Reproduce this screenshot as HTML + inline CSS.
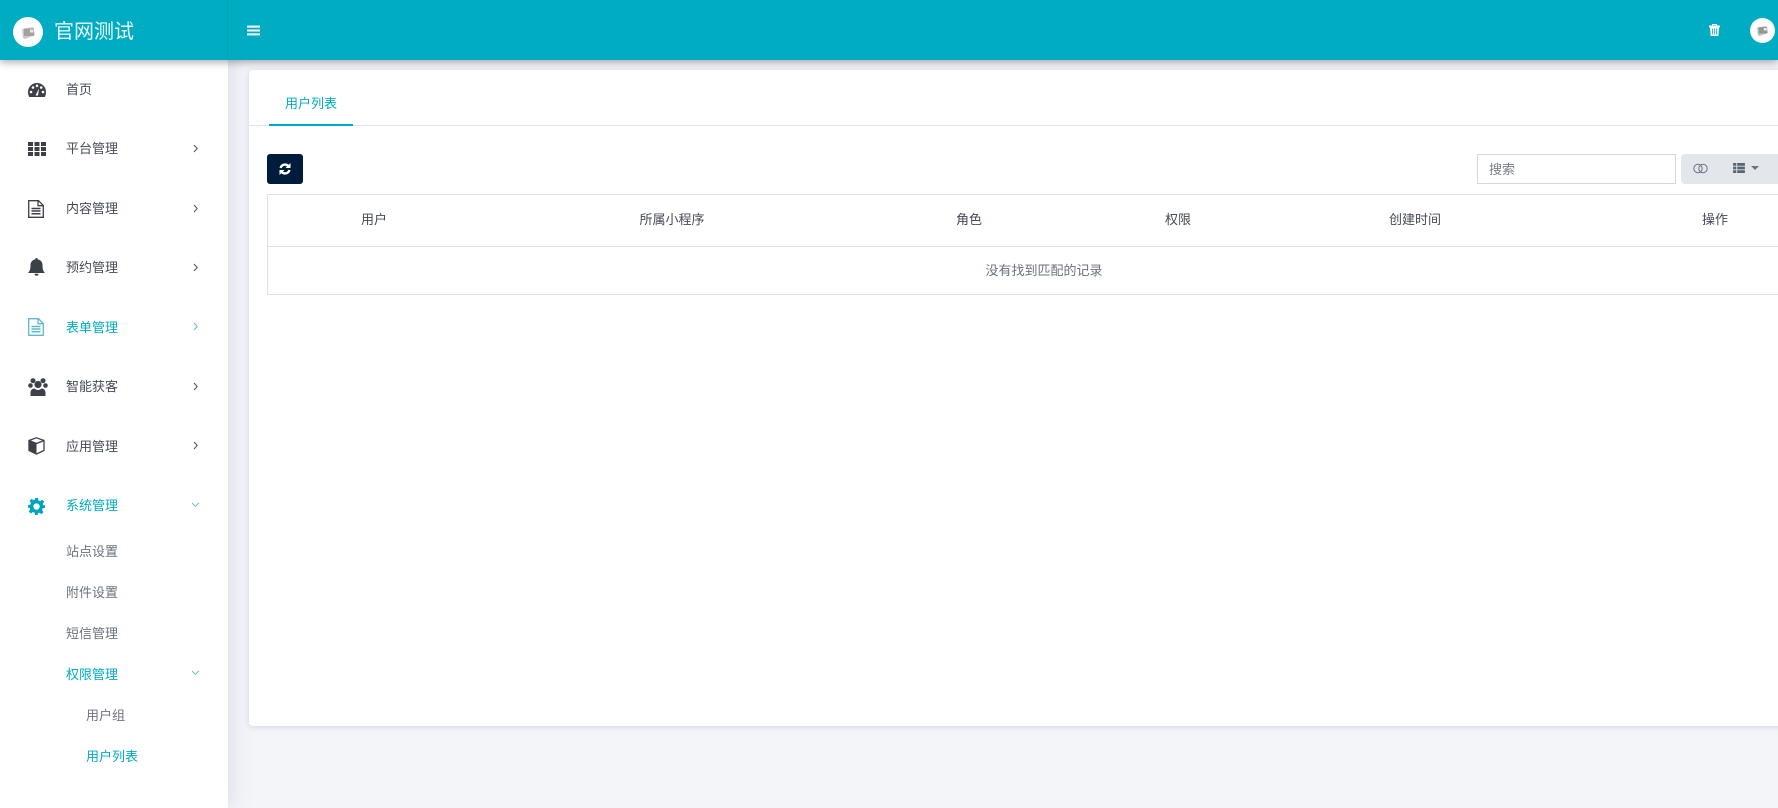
<!DOCTYPE html>
<html lang="zh">
<head>
<meta charset="utf-8">
<title>用户列表</title>
<style>
html,body{margin:0;padding:0;width:1778px;height:808px;overflow:hidden;background:#f4f5f9;font-family:"Liberation Sans","Noto Sans CJK SC",sans-serif;font-size:13px;color:#444b57}
*{box-sizing:border-box}
.a{position:absolute}
.t{position:absolute;white-space:nowrap;line-height:18px;height:18px}
svg{position:absolute;display:block}
#side{left:0;top:0;width:228px;height:808px;background:#fff;box-shadow:0 0 22px rgba(120,130,160,.25)}
#head{left:0;top:0;width:1778px;height:60px;background:#00acc1;box-shadow:0 2px 8px rgba(0,0,0,.35);z-index:3}
#card{left:249px;top:70px;width:1600px;height:656px;background:#fff;border-radius:4px;box-shadow:0 1px 6px rgba(120,130,160,.28)}
.c{color:#00acc1}
.g{color:#6b7280}
.th{transform:translateX(-50%)}
</style>
</head>
<body>
<div class="a" id="side"></div>
<div class="a" id="card"></div>

<div class="a" id="head">
  <div class="a" style="left:227px;top:0;width:1px;height:60px;background:rgba(0,0,0,.05)"></div>
  <div class="a" style="left:13px;top:17px;width:30px;height:30px;border-radius:50%;background:#fff"></div>
  <svg style="left:21px;top:26px" width="15" height="14" viewBox="0 0 15 14"><path d="M1 3l11-2 2 8-10 4-2-1z" fill="#c8c8c8"/><path d="M3 2.500h10v7.500H3z" fill="#a2a2a2"/><path d="M9 3.500h3.500v3H9z" fill="#e8e8e8"/></svg>
  <div class="t" style="left:54px;top:20px;font-size:20px;line-height:24px;height:24px;color:#e9fbfd">官网测试</div>
  <svg style="left:247px;top:25px" width="13" height="11" viewBox="0 0 13 11"><path d="M0 1.600h13M0 5.500h13M0 9.400h13" stroke="#fff" stroke-width="2"/></svg>
  <svg style="left:1709px;top:24px" width="11" height="12" viewBox="0 0 11 12"><path d="M0 2h11v1H0zM3.500 2V.5h4V2" fill="none" stroke="#fff" stroke-width="1"/><path d="M1 3h9l-.6 9H1.600z" fill="#fff"/><path d="M3.500 4.500v6M5.500 4.500v6M7.500 4.500v6" stroke="#00acc1" stroke-width=".8"/></svg>
  <div class="a" style="left:1750px;top:18px;width:25px;height:25px;border-radius:50%;background:#fff"></div>
  <svg style="left:1756px;top:25px" width="13" height="12" viewBox="0 0 15 14"><path d="M1 3l11-2 2 8-10 4-2-1z" fill="#c8c8c8"/><path d="M3 2.500h10v7.500H3z" fill="#959595"/><path d="M9 3.500h3.500v3H9z" fill="#e8e8e8"/></svg>
</div>

<!-- sidebar icons -->
<svg style="left:28px;top:83px" width="18" height="14" viewBox="0 0 18 14"><path d="M9 0a9 9 0 0 1 9 9c0 1.800-.4 3.400-1.200 5H1.200C.4 12.400 0 10.800 0 9a9 9 0 0 1 9-9z" fill="#3c4048"/><circle cx="3" cy="9" r="1.300" fill="#fff"/><circle cx="5" cy="4.500" r="1.300" fill="#fff"/><circle cx="9" cy="2.800" r="1.300" fill="#fff"/><circle cx="13.200" cy="4.500" r="1.300" fill="#fff"/><circle cx="15" cy="9" r="1.300" fill="#fff"/><path d="M7.500 12.500L11 5.500l-1 7z" fill="#fff"/></svg>
<svg style="left:28px;top:142px" width="18" height="14" viewBox="0 0 18 14" fill="#3c4048"><path d="M0 0h5v4H0zM6.500 0h5v4h-5zM13 0h5v4h-5zM0 5h5v4H0zM6.500 5h5v4h-5zM13 5h5v4h-5zM0 10h5v4H0zM6.500 10h5v4h-5zM13 10h5v4h-5z"/></svg>
<svg style="left:28px;top:200px" width="16" height="18" viewBox="0 0 16 18" fill="none" stroke="#3c4048" stroke-width="1.300"><path d="M.7.700h9.800l4.800 4.800v11.800H.7zM10 .7v5h5.300"/><path d="M3.500 8.500h9M3.500 11h9M3.500 13.700h9" stroke-width="1.500"/></svg>
<svg style="left:28px;top:258px" width="17" height="18" viewBox="0 0 17 18" fill="#3c4048"><path d="M8.500 0c.8 0 1.200.6 1.200 1.300C12.600 2 14.500 4 14.500 7c0 4 .6 6 2.500 8H0c1.900-2 2.500-4 2.500-8 0-3 1.900-5 4.800-5.700C7.300.6 7.700 0 8.500 0z"/><path d="M6.500 15.700h4a2 2 0 0 1-4 0z"/></svg>
<svg style="left:28px;top:318px" width="16" height="18" viewBox="0 0 16 18" fill="none" stroke="#5fb9cb" stroke-width="1.300"><path d="M.7.700h9.800l4.800 4.800v11.800H.7zM10 .7v5h5.300"/><path d="M3.500 8.500h9M3.500 11h9M3.500 13.700h9" stroke-width="1.500"/></svg>
<svg style="left:28px;top:378px" width="20" height="18" viewBox="0 0 20 18" fill="#3c4048"><circle cx="5" cy="2.700" r="2.500"/><circle cx="15" cy="2.700" r="2.500"/><circle cx="2.500" cy="7.500" r="2.300"/><circle cx="17.500" cy="7.500" r="2.300"/><circle cx="10" cy="6.500" r="3.600"/><path d="M2.500 18v-3.500c0-2.500 2-4 4-4 1 1 2.300 1.500 3.500 1.500s2.500-.5 3.500-1.500c2 0 4 1.500 4 4V18z"/></svg>
<svg style="left:28px;top:437px" width="17" height="18" viewBox="0 0 17 18"><path d="M8.500.8L16 3.500v10L8.500 17 1 13.500v-10z" fill="#fff" stroke="#3c4048" stroke-width="1.300"/><path d="M1 3.500l7.500 3v10.500L1 13.500z" fill="#3c4048"/><path d="M1 3.500l7.500 3 7.500-3" fill="none" stroke="#3c4048" stroke-width="1.300"/></svg>
<svg style="left:28px;top:498px" width="17" height="17" viewBox="0 0 24 24"><path fill="#00a5bd" fill-rule="evenodd" d="M10 0h4l.7 3.400 2.300 1 3-2 2.800 2.800-2 3 1 2.300L24 10v4l-3.200.7-1 2.300 2 3-2.800 2.800-3-2-2.300 1L14 24h-4l-.7-3.200-2.300-1-3 2-2.800-2.800 2-3-1-2.300L0 14v-4l3.200-.7 1-2.300-2-3L5 1.200l3 2 1.300-.6zM12 7.500a4.500 4.500 0 1 0 0 9 4.500 4.500 0 0 0 0-9z"/></svg>

<!-- sidebar text -->
<div class="t" style="left:66px;top:81px">首页</div>
<div class="t" style="left:66px;top:140px">平台管理</div>
<div class="t" style="left:66px;top:200px">内容管理</div>
<div class="t" style="left:66px;top:259px">预约管理</div>
<div class="t c" style="left:66px;top:319px">表单管理</div>
<div class="t" style="left:66px;top:378px">智能获客</div>
<div class="t" style="left:66px;top:438px">应用管理</div>
<div class="t c" style="left:66px;top:497px">系统管理</div>
<div class="t g" style="left:66px;top:543px">站点设置</div>
<div class="t g" style="left:66px;top:584px">附件设置</div>
<div class="t g" style="left:66px;top:625px">短信管理</div>
<div class="t c" style="left:66px;top:666px">权限管理</div>
<div class="t g" style="left:86px;top:707px">用户组</div>
<div class="t c" style="left:86px;top:748px">用户列表</div>

<!-- chevrons -->
<svg style="left:193px;top:144px" width="6" height="9" viewBox="0 0 6 9"><path d="M1 1l3.200 3.500L1 8" fill="none" stroke="#4a5260" stroke-width="1"/></svg>
<svg style="left:193px;top:204px" width="6" height="9" viewBox="0 0 6 9"><path d="M1 1l3.200 3.500L1 8" fill="none" stroke="#4a5260" stroke-width="1"/></svg>
<svg style="left:193px;top:263px" width="6" height="9" viewBox="0 0 6 9"><path d="M1 1l3.200 3.500L1 8" fill="none" stroke="#4a5260" stroke-width="1"/></svg>
<svg style="left:193px;top:322px" width="6" height="9" viewBox="0 0 6 9"><path d="M1 1l3.200 3.500L1 8" fill="none" stroke="#5fbccd" stroke-width="1"/></svg>
<svg style="left:193px;top:382px" width="6" height="9" viewBox="0 0 6 9"><path d="M1 1l3.200 3.500L1 8" fill="none" stroke="#4a5260" stroke-width="1"/></svg>
<svg style="left:193px;top:441px" width="6" height="9" viewBox="0 0 6 9"><path d="M1 1l3.200 3.500L1 8" fill="none" stroke="#4a5260" stroke-width="1"/></svg>
<svg style="left:191px;top:502px" width="9" height="6" viewBox="0 0 9 6"><path d="M1 1l3.500 3.200L8 1" fill="none" stroke="#5fbccd" stroke-width="1"/></svg>
<svg style="left:191px;top:670px" width="9" height="6" viewBox="0 0 9 6"><path d="M1 1l3.500 3.200L8 1" fill="none" stroke="#5fbccd" stroke-width="1"/></svg>

<!-- tabs -->
<div class="a" style="left:249px;top:125px;width:1529px;height:1px;background:#e1e3e8"></div>
<div class="a" style="left:269px;top:124px;width:84px;height:2px;background:#00acc1"></div>
<div class="t c" style="left:285px;top:95px">用户列表</div>

<!-- toolbar -->
<div class="a" style="left:267px;top:154px;width:36px;height:30px;background:#001c3d;border-radius:3px"></div>
<svg style="left:279px;top:163px" width="12" height="12" viewBox="0 0 12 12" fill="none" stroke="#fff" stroke-width="2.400"><path d="M1.600 5A4.500 4.500 0 0 1 9.600 3.400"/><path d="M10.400 7A4.500 4.500 0 0 1 2.400 8.600"/><path d="M11.500 0v5H6.500z" fill="#fff" stroke="none"/><path d="M.5 12V7h5z" fill="#fff" stroke="none"/></svg>
<div class="a" style="left:1477px;top:154px;width:199px;height:30px;background:#fff;border:1px solid #d6d7e0"></div>
<div class="t g" style="left:1489px;top:161px;color:#777e89">搜索</div>
<div class="a" style="left:1681px;top:154px;width:97px;height:30px;background:#e3e6ea;border-radius:4px 0 0 4px"></div>
<svg style="left:1693px;top:163px" width="15" height="11" viewBox="0 0 15 11" fill="none" stroke="#6b7280" stroke-width="1"><circle cx="5" cy="5.500" r="4.200"/><circle cx="10" cy="5.500" r="4.200"/></svg>
<svg style="left:1733px;top:163px" width="12" height="10" viewBox="0 0 13 11" fill="#5a6372"><path d="M0 0h3.500v3H0zM4.500 0H13v3H4.500zM0 4h3.500v3H0zM4.500 4H13v3H4.500zM0 8h3.500v3H0zM4.500 8H13v3H4.500z"/></svg>
<svg style="left:1751px;top:166px" width="8" height="4" viewBox="0 0 8 4"><path d="M0 0h8L4 4z" fill="#6b7280"/></svg>

<!-- table -->
<div class="a" style="left:267px;top:194px;width:1560px;height:101px;border:1px solid #dfe1e7"></div>
<div class="a" style="left:268px;top:246px;width:1510px;height:1px;background:#dfe1e7"></div>
<div class="t th" style="left:374px;top:211px">用户</div>
<div class="t th" style="left:672px;top:211px">所属小程序</div>
<div class="t th" style="left:969px;top:211px">角色</div>
<div class="t th" style="left:1178px;top:211px">权限</div>
<div class="t th" style="left:1415px;top:211px">创建时间</div>
<div class="t th" style="left:1715px;top:211px">操作</div>
<div class="t th g" style="left:1044px;top:262px">没有找到匹配的记录</div>
</body>
</html>
